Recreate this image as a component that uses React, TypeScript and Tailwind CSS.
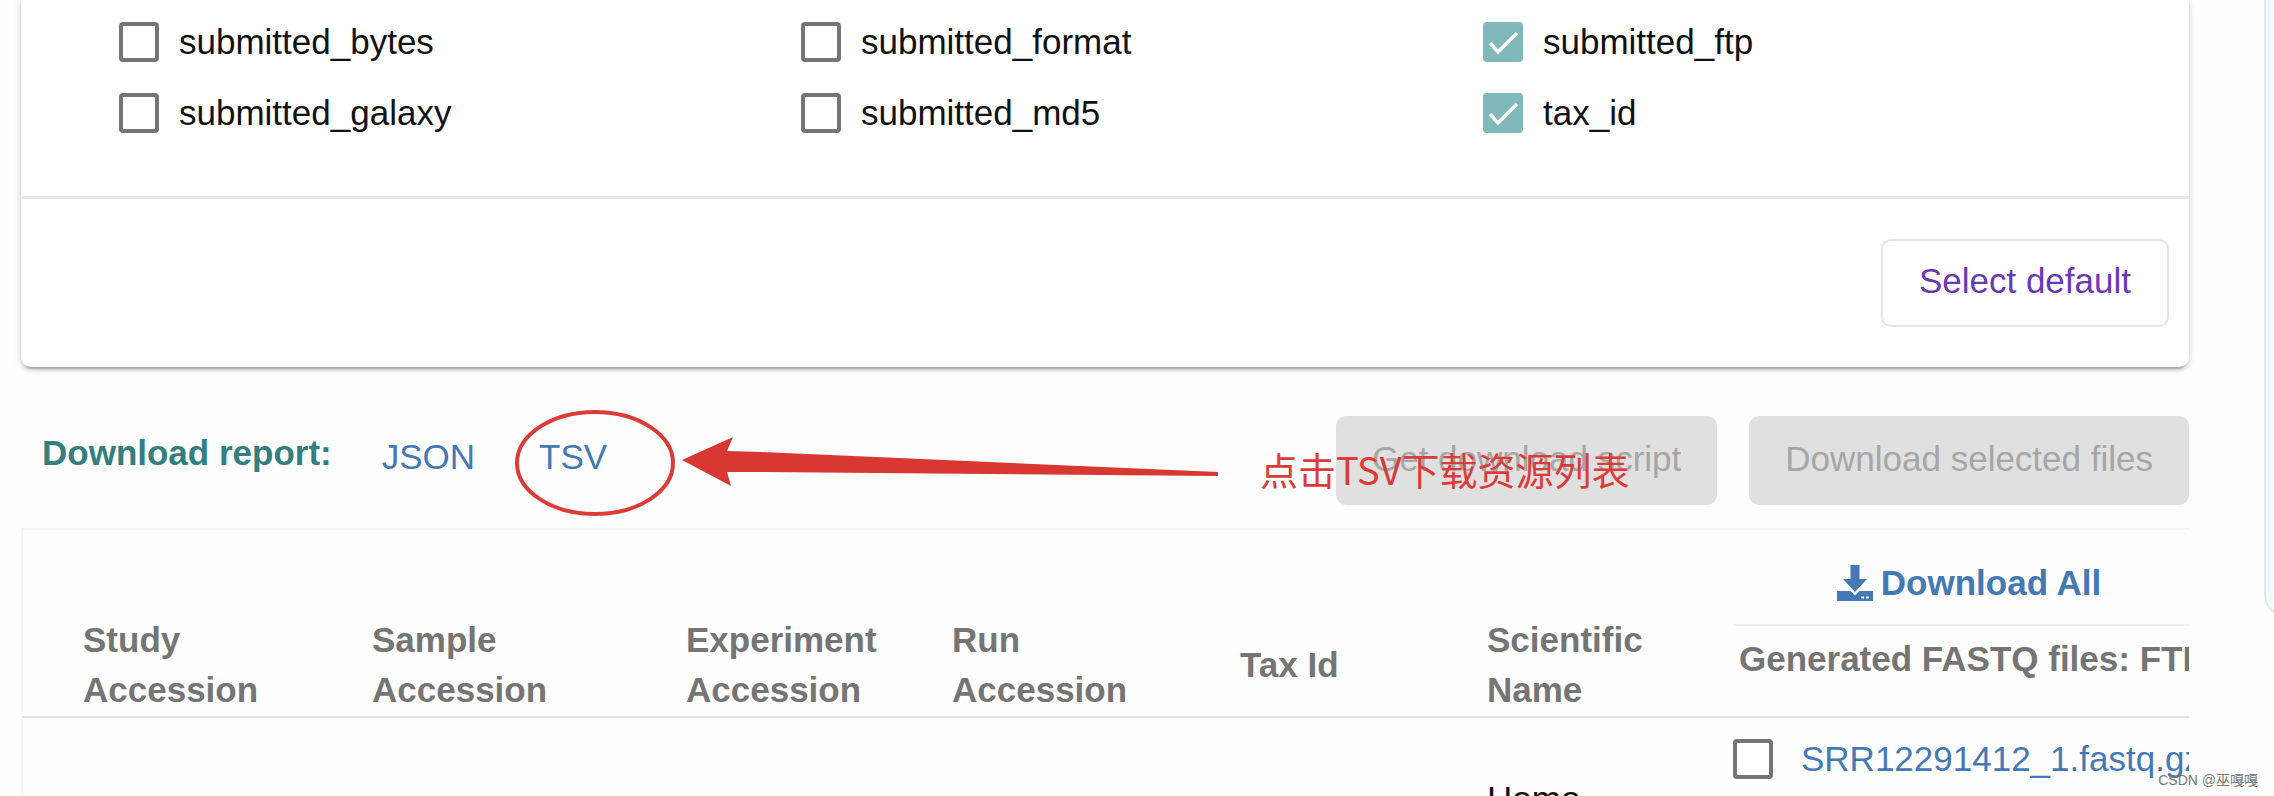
const FIELDS = [
  { name: "submitted_bytes", checked: false },
  { name: "submitted_format", checked: false },
  { name: "submitted_ftp", checked: true },
  { name: "submitted_galaxy", checked: false },
  { name: "submitted_md5", checked: false },
  { name: "tax_id", checked: true },
];

function Checkbox({ id, checked = false, label }: { id: string; checked?: boolean; label?: string }) {
  return (
    <span className="relative inline-flex h-10 w-10 shrink-0">
      <input
        id={id}
        type="checkbox"
        defaultChecked={checked}
        aria-label={label}
        className="peer h-10 w-10 appearance-none rounded border-4 border-[#757575] bg-white checked:border-[#80b9b9] checked:bg-[#80b9b9]"
      />
      <svg
        viewBox="0 0 40 40"
        aria-hidden
        className="pointer-events-none absolute inset-0 hidden h-10 w-10 peer-checked:block"
      >
        <path d="M7 21l8 9L34 11" fill="none" stroke="#fafafa" strokeWidth="3.5" />
      </svg>
    </span>
  );
}

function FieldsCard() {
  return (
    <section className="rounded-b-[10px] bg-white shadow-[0_6px_2px_-4px_rgba(0,0,0,0.2),0_3px_4px_rgba(0,0,0,0.14),0_1px_10px_rgba(0,0,0,0.12)]">
      <div className="grid grid-cols-3 gap-y-[31px] border-b-3 border-[#e8e8e8] pt-[22px] pr-6 pb-[63px] pl-[98px]">
        {FIELDS.map((f) => (
          <div key={f.name} className="flex items-center gap-5">
            <Checkbox id={f.name} checked={f.checked} />
            <label htmlFor={f.name} className="leading-10 text-[#111]">
              {f.name}
            </label>
          </div>
        ))}
      </div>
      <div className="flex justify-end py-10 pr-5">
        <button
          type="button"
          className="h-[88px] rounded-[10px] border-2 border-[#e5e5e5] px-9 pb-1 text-[#673ab7]"
        >
          Select default
        </button>
      </div>
    </section>
  );
}

// Hand-drawn callout pointing at the TSV link
function Callout() {
  return (
    <>
      <svg
        aria-hidden
        viewBox="0 0 712 114"
        className="pointer-events-none absolute -top-[10px] left-[490px] h-[114px] w-[712px]"
      >
        <ellipse cx="84" cy="57" rx="78" ry="51" fill="none" stroke="#dc3c38" strokeWidth="4" />
        <path d="M171 54L222 31L216 45L249 46L707 66V70L249 66L216 66L220 80Z" fill="#d93732" />
      </svg>
      <p className="pointer-events-none absolute top-7 left-[1239px] font-['Noto_Sans_CJK_SC',sans-serif] text-[38px] leading-[50px] whitespace-nowrap text-[#dc3c38]">
        点击TSV下载资源列表
      </p>
    </>
  );
}

function ReportBar() {
  return (
    <div className="relative mt-[49px] flex items-start pl-[21px]">
      <h2 className="pt-3 font-bold text-[#337f80]">Download report:</h2>
      <nav className="flex gap-16 pt-4 pl-[50px] text-[#4479b5]">
        <a href="#json">JSON</a>
        <a href="#tsv">TSV</a>
      </nav>
      <div className="ml-auto flex gap-8 text-[#a6a6a6]">
        <button type="button" disabled className="h-[89px] rounded-[10px] bg-[#e0e0e0] px-9 pb-1">
          Get download script
        </button>
        <button type="button" disabled className="h-[89px] rounded-[10px] bg-[#e0e0e0] px-9 pb-1">
          Download selected files
        </button>
      </div>
      <Callout />
    </div>
  );
}

function DownloadIcon() {
  return (
    <svg viewBox="0 0 36 36" aria-hidden className="h-9 w-9 fill-current">
      <path d="M13.5 0h9v14H30L18 27L6 14h7.500Z" />
      <path
        fillRule="evenodd"
        d="M0 26h13.500l4.500 4.500l4.500-4.500h13.500v10H0ZM24 31.500v2h3V31.500ZM29 31.500v2h3V31.500Z"
      />
    </svg>
  );
}

function ReadFilesTable() {
  return (
    <div className="mt-[23px] overflow-hidden border-t-2 border-l-2 border-[#f4f4f4]">
      <table className="w-[2182px] table-fixed border-collapse text-left">
        <colgroup>
          <col className="w-[289px]" />
          <col className="w-[314px]" />
          <col className="w-[266px]" />
          <col className="w-[288px]" />
          <col className="w-[247px]" />
          <col className="w-[306px]" />
          <col className="w-[472px]" />
        </colgroup>
        <thead className="text-[#757575]">
          <tr className="h-[187px] border-b-2 border-[#e2e2e2]">
            <th className="pt-[84px] pl-[60px]">Study<br />Accession</th>
            <th className="pt-[84px] pl-[60px]">Sample<br />Accession</th>
            <th className="pt-[84px] pl-[60px]">Experiment<br />Accession</th>
            <th className="pt-[84px] pl-[60px]">Run<br />Accession</th>
            <th className="pt-[84px] pl-[60px]">Tax Id</th>
            <th className="pt-[84px] pl-[60px]">Scientific<br />Name</th>
            <th className="align-top whitespace-nowrap">
              <div className="flex justify-center border-b-2 border-[#f0f0f0] pt-7 pb-4">
                <a href="#all" className="flex items-center gap-2 text-[#4479b5]">
                  <DownloadIcon />
                  Download All
                </a>
              </div>
              <div className="pt-2 pl-[6px]">Generated FASTQ files: FTP</div>
            </th>
          </tr>
        </thead>
        <tbody>
          <tr className="align-top">
            <td />
            <td />
            <td />
            <td />
            <td />
            <td className="pt-14 pl-[60px] text-[#111]">Homo<br />sapiens</td>
            <td className="pt-4">
              <div className="flex items-center gap-7 whitespace-nowrap text-[#4479b5]">
                <Checkbox id="run-file-1" label="Select SRR12291412_1.fastq.gz" />
                <a href="#file">SRR12291412_1.fastq.gz</a>
              </div>
            </td>
          </tr>
        </tbody>
      </table>
    </div>
  );
}

export default function App() {
  return (
    <div className="relative flex h-screen items-start overflow-hidden bg-[#fefefe] font-['Liberation_Sans',Arial,sans-serif] text-[35px] leading-[50px]">
      <main className="min-w-0 flex-1 pr-[75px] pl-[21px]">
        <FieldsCard />
        <ReportBar />
        <ReadFilesTable />
      </main>
      <aside className="-mr-6 h-[618px] w-[34px] shrink-0 rounded-bl-[24px] border-b-2 border-l-2 border-[#e3e8ed] bg-[#f4f9fd]" />
      <p className="absolute right-4 bottom-[6px] font-['Liberation_Sans','Noto_Sans_CJK_SC',sans-serif] text-sm text-[#777]">
        CSDN @巫嘎嘎
      </p>
    </div>
  );
}
